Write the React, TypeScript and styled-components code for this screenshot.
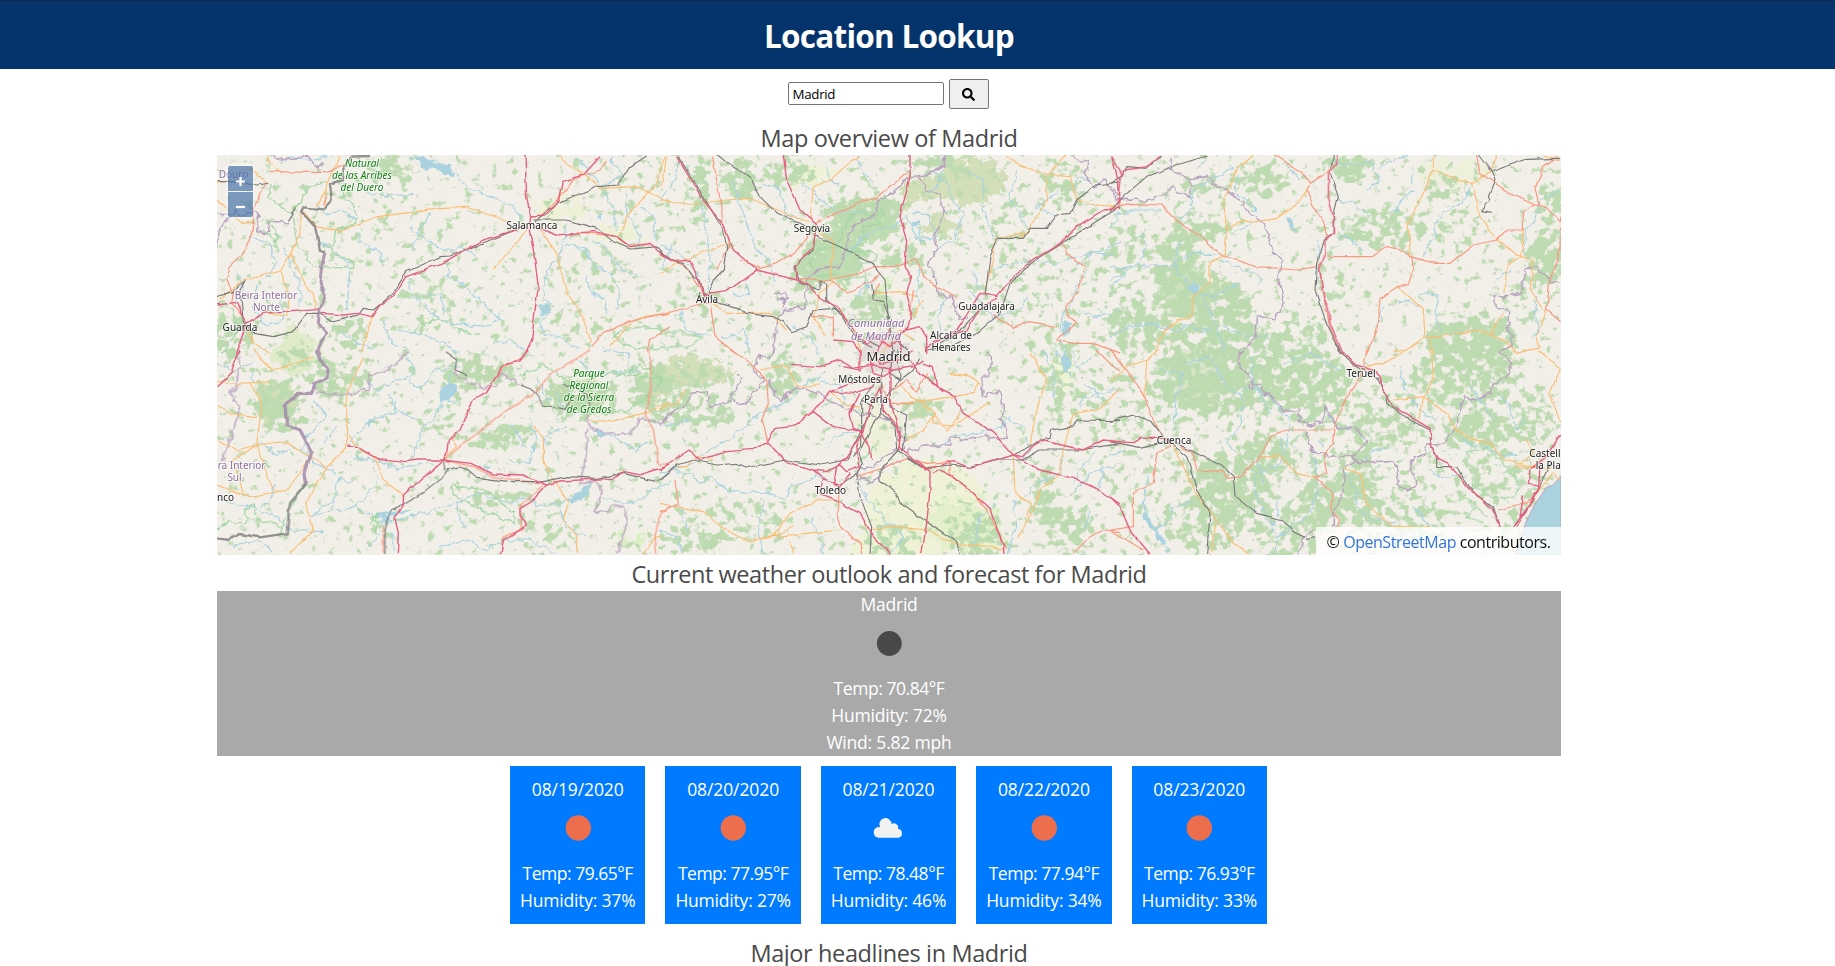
import React from 'react';
import styled, { createGlobalStyle } from 'styled-components';

const GlobalStyle = createGlobalStyle`
  *, *::before, *::after { box-sizing: border-box; }
  html, body { margin: 0; padding: 0; height: 966px; overflow: hidden; background: #fff; }
  body { font-family: "Open Sans", "Noto Sans", sans-serif; font-size: 18px; line-height: 27px; color: #4a4a4a; }
`;

const Page = styled.div`
  height: 966px;
  overflow: hidden;
`;

const Header = styled.header`
  height: 69px;
  padding: 2px 57px 0 0;
  border-top: 1px solid #12284a;
  background: #05336b;
  display: flex;
  align-items: center;
  justify-content: center;
`;

const Title = styled.h1`
  margin: 0;
  font-size: 31.5px;
  line-height: 36px;
  font-weight: 700;
  letter-spacing: -0.75px;
  color: #fff;
`;

const Content = styled.main`
  width: 1344px;
  margin-left: 217px;
`;

const SearchBar = styled.form`
  height: 50px;
  padding-right: 2px;
  display: flex;
  align-items: center;
  justify-content: center;
  gap: 5px;
`;

const SearchInput = styled.input`
  width: 156px;
  height: 23px;
  margin-bottom: 1px;
  padding: 2px 4px 1px;
  border: 1px solid #767676;
  border-radius: 2px;
  font: 13.33px "Open Sans", sans-serif;
  letter-spacing: -0.3px;
  color: #000;
`;

const SearchButton = styled.button`
  width: 40px;
  height: 30px;
  padding: 0;
  border: 1px solid #767676;
  border-radius: 2px;
  background: #efefef;
  display: flex;
  align-items: center;
  justify-content: center;
`;

const SectionTitle = styled.h2<{ $tracking: number }>`
  margin: 0;
  height: 36px;
  padding-top: 1px;
  font-size: 23.5px;
  line-height: 36px;
  font-weight: 400;
  letter-spacing: ${p => p.$tracking}px;
  text-align: center;
  white-space: nowrap;
`;

const MapFrame = styled.section`
  position: relative;
  height: 400px;
  overflow: hidden;
  svg { display: block; }
`;

const ZoomPanel = styled.div`
  position: absolute;
  left: 9px;
  top: 9px;
  padding: 2px;
  border-radius: 4px;
  background: rgba(255, 255, 255, 0.4);
  display: grid;
  gap: 1px;
`;

const ZoomButton = styled.button<{ $edge: 'top' | 'bottom' }>`
  width: 25px;
  height: 25px;
  padding: ${p => (p.$edge === 'top' ? '5px 0 0' : '3px 0 0')};
  border: 0;
  border-radius: ${p => (p.$edge === 'top' ? '2px 2px 0 0' : '0 0 2px 2px')};
  background: rgba(0, 60, 136, 0.5);
  display: flex;
  align-items: center;
  justify-content: center;
`;

const Attribution = styled.div`
  position: absolute;
  right: 0;
  bottom: 0;
  width: 245px;
  height: 28px;
  background: rgba(255, 255, 255, 0.8);
  color: #111;
  font-size: 16px;
  line-height: 30px;
  letter-spacing: -0.46px;
  text-align: center;
  white-space: nowrap;
  a { color: #3273dc; text-decoration: none; }
`;

const Current = styled.section`
  height: 165px;
  background: #a9a9a9;
  color: #fff;
  text-align: center;
`;

const Line = styled.div<{ $tracking?: number }>`
  height: 27px;
  font-size: 17.5px;
  letter-spacing: ${p => p.$tracking ?? -0.2}px;
  white-space: nowrap;
`;

const IconSlot = styled.div`
  height: 57px;
  display: flex;
  justify-content: center;
`;

const Forecast = styled.section`
  display: flex;
  justify-content: center;
  gap: 20px;
  margin: 10px 0;
  padding-right: 1px;
`;

const DayCard = styled.article`
  width: 135.4px;
  height: 158px;
  padding: 10px 0;
  background: #007bff;
  color: #fff;
  text-align: center;
`;

const WeatherIcon = ({ kind }: { kind: 'night' | 'sun' | 'cloud' }) => (
  <IconSlot>
    <svg width="50" height="50" viewBox="0 0 50 50">
      {kind === 'cloud' ? (
        <path d="M15.300 34.800A5.400 5.400 0 0 1 15.600 24.100 5.300 5.300 0 0 1 17 24.200 6.200 6.200 0 1 1 28.700 21.200 4 4 0 0 1 34.900 25.800 4.600 4.600 0 0 1 35.600 34.800Z" fill="#f2f2f2" />
      ) : (
        <circle cx="25.3" cy={kind === 'sun' ? 25 : 25.5} r={kind === 'sun' ? 12.7 : 12.4} fill={kind === 'sun' ? '#ec6e4c' : '#48484a'} />
      )}
    </svg>
  </IconSlot>
);

/* ---- map data: each sheet is drawn at three units per pixel ---- */

type Sheet = {
  x: number; y: number;
  rivers?: string; border?: string; heavy?: string; park?: string;
  primary?: string; trunk?: string; motorway?: string; rail?: string;
};

const sheets: Sheet[] = [
  {
    x: 210, y: 150,
    rivers: 'M215 35L250 20 300 35 350 20M600 20L630 35 680 30 720 65 745 75 765 110 830 135 900 165 935 200M450 110L490 130 540 140 605 130M320 160L350 195 390 180 440 210M655 195L625 250 610 290M350 285L400 330 420 360 410 480M440 250L450 280 500 300 520 335M600 235L640 260 700 300 750 290 800 320M710 340L715 375 770 410 820 460 870 510M595 390L610 440 650 470 690 510 720 520 840 530 880 480M650 430L690 430 700 490M1070 220L1060 280 1040 330 1010 360 1000 440 1025 480 990 520 1000 550 1060 570 1110 600M1070 280L1120 290 1150 340 1200 370 1230 430 1220 480M1100 280L1140 330M1150 270L1190 300 1230 350 1290 380M1130 370L1140 420 1180 450 1190 490M1180 120L1210 180 1220 240M1250 130L1250 190 1290 250 1280 300M1290 170L1330 200 1340 270M1100 20L1170 110 1240 80 1200 20M560 540L620 550 680 570 750 610M400 540L440 580 490 600M520 520L540 570 600 600M170 380L200 340 180 280 120 260M140 400L130 470 170 530 220 510 215 440M80 360L100 420 70 460M220 290L240 350 270 400 270 470M850 580L900 570 960 610M330 270L390 320 420 340',
    border: 'M190 20L240 30 290 15 320 50 340 40M20 295L30 230 80 180 90 200 130 180 145 200 140 245 175 250 180 215 235 215M30 190L60 195',
    heavy: 'M425 20L480 18M425 22L400 50 402 90 360 100 365 150 340 178 280 172 273 185 315 230 330 300 345 305',
    park: 'M180 100L175 140 210 170 250 190M250 200L260 280 310 350 435 355 420 330 365 310 380 240 440 220 435 180 400 140 405 100M250 180L275 150 300 110 350 90M610 550L650 515 720 510 740 540 790 550M180 215L210 270 190 275 160 240M20 460L70 480 80 540 40 610M1210 560L1260 530 1380 540M1210 560L1250 590 1380 600',
    primary: 'M20 100L60 90 80 65 130 60 170 100M170 20L210 70M60 60L110 110M20 150L100 220 130 215M275 180L320 230 390 245 500 200 700 175 770 172 870 205 890 215M345 165L350 100 390 20M270 190L270 250 240 310 285 400 310 430 318 480M240 310L210 360 100 390 30 450M210 365L235 430 230 500 160 485M950 240L900 300 850 358M985 230L1040 310 1070 430 1110 480 1145 580M1055 20L1070 45 1120 70 1170 115 1280 110 1380 155M1365 20L1340 100 1250 200 1225 260M1200 590L1250 530 1300 500 1380 490M320 170L350 120M490 490L470 550 455 610M110 530L130 580 180 610',
    trunk: 'M180 65L350 68 400 45M165 105L130 180 130 240 100 310 60 350 50 390 70 430 65 460 95 495M340 165L350 140M985 205L1060 130 1090 90 1170 60 1190 30M1100 245L1220 260 1250 285 1320 285M1145 590L1180 550 1260 515 1380 485M1310 610L1320 570 1380 530',
    motorway: 'M20 465L80 457 95 495 110 520 160 490 230 483 330 475M80 612L108 520M335 490L400 495 445 490 485 500 510 465 550 440 590 380 705 335 820 270 950 230M945 15L950 140 962 200 958 240 970 300 985 410 975 480 965 570 945 612M960 198L1010 195 1050 145 1060 95 1120 75 1170 20M990 235L1040 255 1150 245 1220 260 1260 290 1320 280 1380 330',
    rail: 'M20 440L70 425 105 392 90 420 100 515 130 550 190 560 250 545 290 490 330 490 370 515 445 495 460 475 490 480 550 430 590 365 690 320 720 318 930 235M975 215L1040 160 1160 110 1225 105 1260 50 1310 18M970 210L1070 210 1160 235 1210 275 1260 297 1345 290 1380 330M20 95L100 95 140 105 175 100M235 215L260 175',
  },
  {
    x: 210, y: 350,
    rivers: 'M600 400L620 420M590 20L610 60 600 100 640 110 670 60 750 50M700 150L680 200 640 230 620 290 600 330M720 70L710 150 740 160M540 130L560 180 620 210M480 210L440 250 420 280M480 210L550 190 560 150M300 250L270 300 330 350 380 370M430 320L530 340 560 355 640 340M300 500L340 485 410 480 460 450 500 400M420 400L390 380 370 450 310 490M450 475L500 510 530 515 640 490 740 460 800 430 900 460 960 440 980 470 1080 450 1120 420M740 460L750 510 770 530M690 590L780 570 820 600 890 570 960 570 1040 610M1150 240L1210 260 1280 300 1310 280M1070 230L1000 260 1010 290M960 220L980 260 960 340 900 330M1040 130L1060 180 1130 190M900 230L930 260 940 290M800 360L840 350 830 380M1180 440L1240 460 1290 450 1320 420 1380 400M1050 480L1070 530 1130 560M20 450L100 465 200 500 240 540 340 545M200 400L180 460 150 470M20 40L70 60 130 40M150 280L200 310 250 290M70 590L150 570 180 600M130 60L130 100M1100 30L1140 60 1200 70 1290 60M1180 0L1250 10 1260 60M980 80L1000 130 1020 150M470 100L500 120 540 100 600 80M310 150L350 200 290 260M380 230L340 280M520 540L470 600M540 545L560 600',
    border: 'M590 5L560 40 480 80 475 120 400 135 315 128M730 70L820 115 860 105 875 65 930 105M1380 190L1350 220 1300 200 1260 250 1215 255 1140 235 1130 190M1130 235L1125 330 1110 400 1160 395 1175 430 1155 485 1190 490 1210 465 1240 470 1250 520 1235 570 1220 612M90 20L80 110 60 130 90 180 70 240 40 330',
    park: 'M20 540L60 515 110 515 110 480 130 465 140 510 200 520 210 550 240 470 290 400M730 405L830 420 910 490 915 520 840 490 735 440 725 405M930 80L1000 45 1050 80 1200 70 1360 90 1300 150 1240 185 1180 190M1360 90L1290 45 1220 80M480 520L500 490 500 550',
    primary: 'M20 95L80 100 185 95M130 0L185 60 230 50 310 20M120 100L155 160 140 290 190 420M20 170L60 190 140 200M20 270L80 300 140 285 220 275 320 330 350 355 410 290 410 140 415 120 460 20M20 405L120 440 230 420 300 330 300 315M140 285L70 330 100 430M350 355L320 400 290 460 310 540 240 610M415 260L450 300 490 320 520 390 585 440M700 325L740 290 720 260M970 230L1000 260 1000 340 1040 400 1075 460 1060 510 1100 560 1100 612M1140 210L1200 215 1260 200 1300 190 1380 160M1300 612L1330 570 1350 560',
    trunk: 'M1140 0L1040 60 970 130 880 190 800 250 700 330M830 120L880 50 945 20M1315 0L1325 100 1305 190 1330 240 1345 340 1380 345M700 330L790 350 850 380 1000 400M1000 405L930 470 935 540 880 560 875 590M1380 470L1350 490 1335 560 1340 612M520 530L520 610',
    motorway: 'M90 0L65 65 20 110M955 0L925 35 880 45 830 125 790 150 750 240 715 270 710 310 700 330 580 435 580 470 555 500 565 550 562 612M415 285L440 290 500 325 590 335 620 330 700 330M700 330L780 340 850 372 940 375 1010 405 1050 393 1210 385 1245 365 1290 375 1380 345M1010 405L960 460 930 475 930 495 950 525 900 560 880 570 872 612',
    rail: 'M705 5L740 30 735 60 775 75M930 105L970 120 1000 165 1070 178 1080 150M1060 100L1130 130 1140 170M700 330L705 360 750 350 775 360 800 382 900 395 1000 395 1070 380 1160 385 1240 370 1340 395 1380 365M715 360L700 380 635 430 580 465 545 480 525 540 525 612',
  },
  {
    x: 660, y: 150,
    rivers: 'M0 150L50 80 60 30M110 100L130 180 150 320 145 420M215 90L260 220 290 300 330 330 340 400M310 100L360 120 380 190 420 210M430 100L500 160 540 190 620 180M600 270L640 240 700 230 740 200 770 260 830 265 800 190 760 190M820 60L860 100 880 150 910 190 880 270 830 300M850 60L830 110 800 130M920 60L970 90 970 180 1010 280M1070 60L1050 150 1110 240M1200 120L1130 170 1190 200M1380 280L1340 300 1250 320 1190 340 1110 330 1000 355M1250 350L1300 310 1360 320M1280 350L1240 440 1210 500 1200 560 1220 612M590 20L620 80 640 100M540 110L510 90 500 50M0 290L60 310 120 380M40 280L0 360M220 430L270 440 260 400M400 530L450 560 480 610M590 440L620 400 660 380M780 360L770 430 790 480M860 440L830 500 850 560M180 570L250 540 270 600M940 370L960 420M930 420L1000 500 1080 480 1100 440M1250 480L1310 500 1380 480M600 270L560 320M1290 90L1250 80 1240 130M780 230L770 270M60 480L80 540 150 560',
    border: 'M850 20L850 45 800 75 750 80 710 120 660 150 640 200 600 215 570 240 540 350 480 355 440 390 435 470 370 480 370 440M780 80L800 120 835 135 855 190 820 260 830 300 800 350 830 380 830 430 880 445 900 510 930 500M1230 20L1285 35 1275 70 1300 115 1330 90 1380 140M345 430L375 430 385 445 350 450M350 510L340 612M370 480L350 510',
    park: 'M570 200L600 180 630 200 670 180 660 220 600 230 620 260 580 300 650 310 650 330 600 340 620 380 550 385 510 370 470 380 450 340 470 300 530 290 550 240ZM640 190L670 240M0 550L60 545 120 560 100 590 0 590',
    primary: 'M20 20L10 90 0 110M0 150L80 165 200 150 270 145 400 200 445 215M600 20L555 50 510 90 460 110 450 210M0 370L70 330 200 280M475 250L520 270 510 370 520 400M1040 20L1080 45 1160 75 1230 80 1250 150 1300 165 1380 170M1160 80L1160 150 1100 250 1005 265 1000 320 980 400 975 430M1170 70L1215 15M520 395L480 430 460 500 500 560M150 455L200 490 330 490 380 540M640 430L720 425 770 440M540 480L590 550 600 612M790 450L760 500M670 610L720 540 760 570M1110 240L1080 265',
    trunk: 'M158 20L180 150 190 220 210 280 170 360M470 215L520 195 600 155 650 145 740 70M0 495L110 465 150 455M150 455L165 560 230 612M240 330L300 355 350 340 400 310 450 250M410 385L500 390 600 370 640 350 700 350 770 325 790 380 830 410 890 445M520 395L560 430 640 390 660 370M1205 280L1220 310 1275 350 1250 430 1220 470 1225 500 1250 520 1190 570 1240 580 1300 580 1380 610M1000 490L1060 535 1110 515 1190 530M0 315L80 350 130 430M455 500L520 500 520 560M750 500L760 420M640 430L660 400',
    motorway: 'M50 20L130 150 190 225 220 300 290 360 410 390 450 410 480 445 530 470 570 520 590 560M370 15L380 90 420 180 470 220 460 290 410 345 410 390M750 15L750 80 720 200 740 270 735 350 755 380 740 430 755 490 740 540M0 310L40 335 90 330 120 400 130 435 200 425 290 360M1355 20L1375 90 1380 160M1380 175L1330 180 1250 230 1200 280 1120 330 1050 390 1010 440 960 430 910 510 890 540 800 590M590 560L620 580 650 560 690 590 740 540 780 530 800 560 800 612M520 570L580 575 600 612M1010 445L960 480 920 540 860 560M690 540L650 610M740 530L720 560 720 612',
    rail: 'M170 15L200 40 270 80 300 140 350 190 440 230M55 20L130 140 190 240 200 290 190 360 160 390 145 430M460 255L540 290 630 335 675 390 680 450 690 540 700 612M0 300L40 335 70 340 100 380 120 390 130 430 170 455 240 475 255 490 340 500 370 515 395 545 440 530 460 480 520 475 550 500M465 260L460 300 405 350 420 400 480 420 480 390 500 400 500 450 550 500 590 570 640 590M1380 95L1310 105 1250 150 1230 190 1190 195 1160 235 1110 235 1090 265 1010 265 990 320 975 440M1380 170L1220 270 1140 320 1050 400 1020 490 950 550 870 590 800 600M960 480L900 540 840 580M635 400L640 450 670 455 690 510M700 560L740 600M660 590L620 570',
  },
  {
    x: 660, y: 350,
    rivers: 'M0 370L80 350 150 300 220 260 300 190 390 150 440 100 500 60M40 365L100 370 120 400 150 380 200 420 260 430 320 425 380 450 390 410 430 400 470 370 500 390M590 390L620 450 680 510 730 560 690 612M500 300L520 260 600 240M470 90L540 110 560 160M1190 0L1230 80M1150 0L1180 70 1180 150M1240 0L1250 50 1300 20M1380 120L1270 140 1260 170M1050 200L1020 230 950 250 880 260 840 290M1100 260L1110 300 1080 330M1210 310L1200 370 1130 400 1100 440M1300 310L1250 370 1240 400M1380 340L1290 370 1240 430M1330 350L1310 430M1290 480L1270 540M1000 470L960 500 940 590M1060 450L1070 530 1040 612M310 450L295 550 310 612M450 500L480 560 490 612M60 470L80 540M0 230L60 220 90 200M0 540L50 560 70 612M1270 100L1330 150M1040 210L1100 230',
    border: 'M345 0L335 20 290 20 285 70 310 95 260 160 230 165 215 140 240 90 230 75M215 150L150 170 140 125 90 130 70 170 30 190 0 225M325 90L360 155 410 110 480 130 520 160 600 190 690 210 740 270 720 300 670 320 640 350 600 360 590 385 640 395 680 350 720 330M740 300L780 300 790 285 870 285 870 265 910 270 940 265 980 255 990 270 1035 265 1040 235 1020 210 1030 190 1020 120 970 140 965 80 990 70 995 20 980 0',
    park: 'M590 340L620 320 640 290',
    primary: 'M0 180L50 160 80 120M300 60L380 45 410 110 480 105M510 125L560 170 600 170M80 345L110 320 160 330M50 350L80 350M0 460L130 485 200 540 270 575 340 560 400 530M340 560L390 490 470 450 530 450M340 560L440 550 540 540M390 570L400 612M630 540L700 530 800 540 880 580 1000 590 1030 600M870 70L940 80 960 100 940 130 780 155 710 160M720 100L750 140 790 160 820 190 820 220 880 225 990 160M740 270L790 240 820 200M1110 10L1160 90 1130 170 1110 290M1240 190L1210 300 1200 370 1140 420 1110 500 1070 560M1060 320L1065 430 1110 460 1100 500M1240 190L1310 180 1330 160 1380 120M820 190L860 240 900 190',
    trunk: 'M210 0L260 30 320 90 325 160 305 210 320 275M45 390L55 460 0 485M540 410L530 490 540 530 600 580 605 612M590 380L650 360 740 325M740 325L800 340 870 335 870 370 940 430 980 480 1040 600M1240 610L1290 560 1330 540 1380 545M700 120L740 90 770 130 800 70M620 100L660 90 690 160 760 160M1310 0L1350 40 1380 60',
    motorway: 'M0 360L90 300 120 330 200 305 280 298 320 275 345 235 400 230 460 185 510 125 600 90M320 275L380 335 460 360 500 365 540 345 560 365 600 350 590 290 610 240 630 170 660 110M395 43L480 50 540 30 580 55 640 45 700 60 760 50 790 30M460 185L520 230 610 245M510 125L580 130 640 110M600 130L570 190 580 235 610 245 560 320 530 350 520 400 540 410 570 370M600 245L630 290 635 330M460 360L490 385 480 430 530 450 560 470 600 490 640 560 690 612M540 405L490 385M660 110L670 180 710 230 720 290 760 330 800 360M690 50L690 150 710 220 720 270 715 300M780 70L830 110 880 135 910 190 960 220 1000 250 1060 315 1140 360 1240 385 1320 420 1380 462M790 360L880 335 930 355 1060 315 1090 320 1140 270 1270 300 1330 270 1380 275M770 330L810 365 810 420 800 520 785 612M820 370L840 360 880 380 930 420 990 475 1030 590 1032 612M600 0L600 60 550 50M830 110L820 50 790 40M640 0L660 40 720 30 760 0M700 60L670 80 640 70 630 30M740 20L780 70 850 125',
    rail: 'M0 390L50 345 100 330 170 345 230 340 260 352 380 330 480 345 560 330 600 250 640 170 605 150 605 290 580 320M540 405L590 370 610 340 600 310 640 220 665 190 665 50M665 190L705 230 710 295 740 320 790 355M665 150L700 115 720 80 710 0M690 120L690 170 740 195 730 300M715 300L660 360 660 390 710 430 720 460 800 515 890 575 900 612M590 370L600 440 635 530 630 612M740 325L790 355 870 345 930 352 1020 330 1090 330 1140 300 1260 300 1380 280M1060 315L1110 290 1140 270 1170 265 1175 240 1240 230 1250 210 1380 212M700 0L690 70 720 90 760 60 780 20M605 150L660 80',
  },
  {
    x: 1110, y: 150,
    rivers: 'M370 50L330 80 250 110 240 180 210 210M380 80L380 130 440 180M530 50L570 90M670 40L750 45 780 30 810 90 770 120M810 50L840 30 890 20M905 50L905 105M915 120L880 140 860 180 840 190M680 150L730 160 765 190M680 260L720 265 760 300M1080 100L1070 140 1020 180 980 210 970 260 940 320M1350 120L1290 150 1280 200 1250 240 1240 310M0 240L20 200 60 180 150 180M105 230L100 320 50 370 0 410M0 355L80 350 180 345 260 310 320 310M210 270L190 340 240 420 310 440 380 400M330 325L380 350 440 370 450 400M270 440L310 500 330 570 345 612M0 560L60 530 130 520 200 540 230 520 280 550 300 530M340 530L420 560 470 560M370 245L430 220M625 270L625 400M860 460L890 450 930 470M930 430L990 435 975 500 990 540M1200 360L1160 390M1280 440L1270 500 1290 540 1260 570M820 470L800 530M450 525L420 530M0 390L60 360M290 20L260 60',
    border: 'M180 20L185 65 240 85 290 75 310 100 350 120 400 160 430 200 460 220 480 260 475 290 515 330 505 390 520 430 510 490 490 510 440 495 435 565 385 612M240 85L240 145 190 115 170 130 100 155 50 145 20 150 0 120M1350 395L1320 395 1280 350 1250 360 1230 425 1190 440 1155 435 1155 475 1200 480 1195 540 1210 580 1175 600',
    primary: 'M430 15L385 50 370 90 340 150 350 240 345 310 300 340 300 400 250 440 245 500 200 510 145 570 140 612M350 240L400 210 440 215 500 205 560 165 590 120M0 165L30 170M970 15L970 60 940 130 895 220 900 320M970 60L1020 80 1085 100 1100 150 1110 200 1160 270 1230 320 1270 330 1260 420 1300 480M1230 320L1190 345 1185 430M1240 240L1240 290 1230 320M1085 100L1140 65 1160 15M865 410L940 480 945 560 990 560 1050 550 1090 540 1140 550 1180 490M945 560L890 600 850 605M960 570L960 612M1310 480L1280 560 1290 590 1220 610 1180 570 1140 550M1300 15L1350 30',
    trunk: 'M495 15L570 65 600 100 590 120 610 170 640 210 650 260M600 100L650 70 670 40M0 175L60 160 155 165 200 215 280 265 335 315 440 350 560 360 620 350M650 318L690 320 790 320 830 290 860 295 900 320 980 340 1020 340 1090 285 1160 270 1190 240 1240 240 1240 190 1275 165M905 320L910 355 895 400 865 410 810 450 800 540 770 612M1100 15L1110 70 1200 130 1275 165 1310 170 1350 215M1340 20L1300 50 1275 120 1290 165M1352 200L1350 300 1320 390 1310 480 1352 515M625 340L640 430 660 530 690 600',
    motorway: 'M5 20L35 70 25 165M150 20L110 50 45 60 30 90M680 15L680 40 655 70 655 140 670 200 670 250 645 270 645 310 628 350 640 440 655 475 660 520 700 612',
    rail: 'M0 185L40 140 110 80 200 45 290 18M0 100L40 75 50 50 110 55 155 18M670 15L660 70 685 140 670 200 670 250 640 270 620 340 615 420 650 520 695 612M1105 15L1140 60 1155 90 1135 140 1140 150 1115 185 1145 190M1145 65L1200 45 1250 28 1350 25',
  },
  {
    x: 1110, y: 350,
    rivers: 'M110 380L100 460 130 540 180 612M130 540L180 510 190 470 250 455M150 60L220 70 200 130 190 240M220 40L300 20 350 110 400 140 390 230 350 280 380 310M420 20L440 110 480 190M520 40L600 10 690 60M400 110L470 130 520 190 540 210 530 290 500 350 430 370 440 440 460 480 500 560 500 612M505 440L500 500M610 320L625 400 610 470 560 520 500 560M690 350L740 420 740 470 790 510 860 520M760 330L790 300 840 290M870 50L880 110 930 180 980 215M1080 110L1120 160 1150 210M1170 130L1200 180 1220 240 1240 200M950 360L1000 385 1070 380M1050 270L1120 290 1160 310 1220 320M910 470L960 530M520 300L510 260M0 320L50 300M620 270L640 290M650 190L680 230 740 235 760 270M440 330L460 400',
    border: 'M400 0L375 35 410 70 430 90 415 110 430 120 430 95 470 130 520 180 570 180 570 215 600 225 640 215 645 170 670 210 685 235 740 235 775 275 740 310 680 320 605 305 590 245M720 310L740 330 700 355 700 420 670 490 670 530M610 540L580 570 565 612M740 335L820 330 860 345 865 410 890 425 920 400 900 350 910 320 940 320 950 285 990 285 1020 260 1040 220 1060 140 1100 150 1140 130 1150 100 1190 85 1205 40 1170 0',
    park: 'M1070 310L1120 295 1150 310 1200 360 1230 410 1210 440 1130 440 1120 420 1080 410 1100 360 1075 340ZM1045 450L1070 440 1090 470 1070 500 1120 520M1100 470L1130 500',
    primary: 'M0 95L50 50 110 30 150 0M110 30L105 140M190 290L230 370 250 420 320 510 300 612M320 510L370 580 420 612M450 320L510 320 560 370 620 385M700 355L750 370 770 460 850 530 960 530M770 50L830 35 890 0M965 0L970 90 940 140 930 210M850 150L940 140 1010 190 1030 230 1080 265 1140 280 1180 330 1270 350M1250 270L1270 310 1220 350 1320 355M1270 350L1310 320M1285 0L1352 55 1320 130 1352 220M1352 390L1330 370 1270 440',
    trunk: 'M0 0L50 60 100 130 130 210 150 245 180 290 140 310 130 400 70 430 70 530 0 540M210 290L250 310 260 360 340 365 350 385 390 380 450 320 485 255 530 240 590 240 670 240 680 210 700 160 740 100 755 60M675 240L670 280 640 310 650 370 615 385 670 430 665 480 685 510 680 530M770 0L760 60M1165 480L1230 465 1270 445M0 540L100 600',
    motorway: 'M0 440L30 470 60 540 120 612M0 275L75 278 95 265 180 265M695 0L740 45 800 65 820 120 850 170 900 200 960 235 965 290 985 325 1015 340 1080 420 1150 480 1170 530M1352 255L1300 330 1260 360 1255 400 1290 410 1240 490 1210 530M1290 350L1285 420 1220 530M1240 440L1230 500',
    rail: 'M0 215L70 195 125 215 160 260 230 320 260 420 300 490 290 612M0 275L90 292 180 270 240 300 340 350 370 380 375 440 440 490 520 510 550 545 590 565 615 560M685 0L740 50 800 85 830 140 830 160 890 205 960 240 965 290 980 320 980 350 1010 350 1040 350 1060 385 1100 440 1150 470 1170 530M1320 340L1280 430 1210 530',
  },
];

/* wooded areas: centre, radii, strength */
const woods: number[][] = [
  [390, 168, 26, 14, 0.8], [230, 337, 22, 24, 0.7], [277, 405, 24, 28, 0.95], [340, 380, 34, 18, 0.75], [300, 360, 20, 20, 0.5],
  [350, 335, 20, 18, 0.7], [430, 300, 40, 25, 0.3], [477, 372, 40, 14, 0.9], [450, 385, 10, 18, 0.7], [503, 436, 36, 14, 0.75], [577, 398, 40, 20, 0.85],
  [648, 388, 22, 24, 0.8], [440, 420, 22, 12, 0.5], [400, 235, 70, 40, 0.15], [600, 270, 40, 20, 0.3], [570, 325, 50, 20, 0.25], [500, 497, 36, 10, 0.55], [545, 530, 30, 18, 0.4],
  [372, 525, 14, 15, 0.5], [700, 180, 10, 45, 0.8], [740, 180, 18, 22, 0.85], [787, 172, 26, 14, 0.8], [865, 215, 42, 20, 1], [835, 255, 30, 26, 1],
  [806, 275, 14, 18, 1], [900, 255, 22, 14, 0.75], [873, 308, 30, 16, 0.85], [940, 165, 30, 14, 0.7], [1005, 225, 30, 40, 0.3], [1060, 175, 22, 14, 0.6], [1070, 195, 24, 15, 0.6],
  [690, 412, 50, 16, 0.7], [784, 376, 16, 24, 0.95], [680, 378, 50, 16, 0.6], [733, 523, 60, 26, 0.4], [690, 542, 36, 12, 0.6], [890, 540, 22, 20, 0.65],
  [978, 535, 30, 24, 0.75], [1043, 497, 12, 32, 0.85], [1072, 528, 24, 24, 0.8], [1060, 380, 18, 40, 0.6], [1110, 400, 40, 44, 0.3], [920, 410, 18, 12, 0.7],
  [1350, 168, 24, 16, 0.95], [1200, 187, 20, 10, 0.7], [1262, 180, 30, 18, 0.7], [1200, 228, 32, 14, 0.9], [1178, 270, 24, 34, 1], [1217, 308, 34, 34, 1],
  [1150, 325, 44, 28, 0.8], [1130, 245, 30, 20, 0.5], [1253, 345, 34, 22, 0.8], [1306, 335, 26, 20, 0.6], [1383, 228, 46, 20, 0.7], [1443, 188, 22, 14, 0.7], [1456, 230, 20, 20, 0.5],
  [1547, 257, 22, 30, 1], [1550, 200, 14, 18, 0.8], [1470, 340, 46, 26, 0.95], [1210, 380, 60, 36, 0.95], [1303, 385, 50, 34, 0.85], [1467, 375, 54, 34, 0.75],
  [1480, 430, 36, 18, 0.9], [1380, 425, 40, 25, 0.55], [1323, 498, 26, 26, 0.85], [1357, 485, 20, 34, 0.95], [1400, 520, 50, 24, 0.5], [1227, 490, 44, 36, 0.85], [1200, 530, 40, 20, 0.55],
  [1267, 455, 26, 20, 0.9], [1290, 530, 36, 26, 0.55], [1510, 480, 40, 30, 0.4], [1533, 418, 24, 30, 0.55], [1520, 300, 24, 20, 0.35], [1340, 280, 20, 30, 0.3],
  [1300, 460, 200, 100, 0.2], [1060, 300, 100, 60, 0.2], [1530, 530, 30, 20, 0.5], [640, 190, 60, 30, 0.1], [700, 300, 30, 20, 0.35],
];

const meadows: [number, number, number, number, string][] = [
  [970, 180, 34, 24, '#d2dfb8'], [920, 190, 18, 14, '#d2dfb8'], [945, 225, 18, 12, '#d2dfb8'], [690, 372, 40, 12, '#d3dfb9'], [922, 410, 10, 10, '#d3dfb9'],
  [812, 175, 18, 11, '#eff2d6'], [1450, 172, 34, 15, '#eff0dc'], [560, 210, 26, 14, '#eef0d8'], [620, 235, 30, 10, '#eef0d8'], [925, 505, 58, 44, '#eff2d6'], [900, 545, 50, 18, '#eff2d6'],
  [880, 430, 24, 26, '#eef0da'], [965, 525, 40, 28, '#e4f0cc'], [882, 287, 6, 12, '#ddefc4'], [1060, 370, 8, 18, '#eef3d4'], [632, 540, 9, 6, '#dcf0c8'], [295, 352, 24, 22, '#dfebc9'],
  [865, 225, 30, 20, '#c3dfb4'], [833, 262, 26, 22, '#c3dfb4'], [1190, 290, 26, 26, '#d0e3c2'], [1200, 375, 30, 28, '#d9e6cb'],
  [660, 385, 12, 12, '#d3dfb9'], [585, 400, 22, 14, '#d3dfb9'], [275, 400, 18, 20, '#d3dfb9'], [885, 350, 24, 18, '#e3dcd8'],
];

const lakes = 'M414 157l8-2 14 8 14 2 4 12-10-3-10-6-10 2zM538 306l8-2 5 5-6 6-7 2 4-7zM440 389l14-8 2 12-6 6-10 3zM376 514l16-3 20 0-14 4-24 2zM378 522l6-2-4 5zM366 423l8-3-4 7zM566 500l14-9 9-8 1 10-9 7-11 5zM382 516l6-4 1 12-8-2zM595 431l8 0-1 5zM1285 218l6 1 6 12-8-4zM862 283l8-1-2 5zM918 238l8 3-6 3zM910 225l9-6-2 8zM1062 350l10 14-6 10-6-12zM1144 510l6 10 12 16 6 10-6 0-10-14-8-14zM1065 320l5 2-4 16-4-3zM1190 288l4-8 4 10-3 6zM1250 203l8 9-5 0zM1265 518l12 6-4 2zM597 216l4-2 0 6z';

type Label = { t: string; x: number; y: number; c?: 'city' | 'park' | 'region'; s?: number; a?: 'start' | 'end' };
const labels: Label[] = [
  { t: 'Natural', x: 362, y: 167, c: 'park' }, { t: 'de las Arribes', x: 362, y: 179, c: 'park' }, { t: 'del Duero', x: 362, y: 191, c: 'park' },
  { t: 'Douro', x: 233.5, y: 178, c: 'region' }, { t: 'Salamanca', x: 532, y: 228.5 },
  { t: 'Beira Interior', x: 266, y: 298.5, c: 'region' }, { t: 'Norte', x: 266.5, y: 310.5, c: 'region' }, { t: 'Guarda', x: 240, y: 331 },
  { t: 'ira Interior', x: 265.5, y: 469, c: 'region', a: 'end' }, { t: 'Sul', x: 234.5, y: 481, c: 'region' }, { t: 'nco', x: 234, y: 500.5, a: 'end' },
  { t: 'Parque', x: 589, y: 377, c: 'park' }, { t: 'Regional', x: 589, y: 389, c: 'park' }, { t: 'de la Sierra', x: 589, y: 401, c: 'park' }, { t: 'de Gredos', x: 589, y: 412.5, c: 'park' },
  { t: 'Segovia', x: 812, y: 232 }, { t: 'Ávila', x: 707, y: 303 },
  { t: 'Comunidad', x: 876, y: 327, c: 'region', s: 11 }, { t: 'de Madrid', x: 876, y: 340, c: 'region', s: 11 },
  { t: 'Guadalajara', x: 986.5, y: 309.5 }, { t: 'Alcalá de', x: 951, y: 338.5 }, { t: 'Henares', x: 951, y: 351 },
  { t: 'Madrid', x: 888.5, y: 361, s: 13 }, { t: 'Móstoles', x: 859.5, y: 382.5 }, { t: 'Parla', x: 876, y: 403 }, { t: 'Toledo', x: 830.5, y: 493.5 },
  { t: 'Cuenca', x: 1174, y: 443.5 }, { t: 'Teruel', x: 1361, y: 377 }, { t: 'Castell', x: 1560.5, y: 456.5, a: 'end' }, { t: 'la Pla', x: 1560.8, y: 469, a: 'end' },
];

const MapLabel = styled.text<{ $kind: 'city' | 'park' | 'region'; $italic: boolean; $size: number }>`
  font-family: "Noto Sans", sans-serif;
  font-size: ${p => p.$size}px;
  font-style: ${p => (p.$italic ? 'italic' : 'normal')};
  fill: ${p => ({ city: '#222', park: '#107c10', region: '#8d6d9d' }[p.$kind])};
  stroke: rgba(255, 255, 255, 0.65);
  stroke-width: 2px;
  stroke-linejoin: round;
  paint-order: stroke;
`;

const layers: [keyof Sheet, string, number][] = [
  ['rivers', '#aad3df', 3.4], ['park', '#a5d6a5', 4], ['border', '#b9a4bf', 4.4], ['primary', '#fbbf74', 3.4],
  ['trunk', '#f99a80', 3.6], ['rail', '#7a7a7a', 3.4], ['motorway', '#e4617f', 4.2],
];

const RegionMap = () => (
  <svg width="1344" height="400" viewBox="217 155 1344 400">
    <defs>
      <filter id="forest" filterUnits="userSpaceOnUse" x="217" y="155" width="1344" height="400" colorInterpolationFilters="sRGB">
        <feTurbulence type="fractalNoise" baseFrequency="0.11 0.12" numOctaves="4" seed="11" result="n" />
        <feComposite in="n" in2="SourceGraphic" operator="arithmetic" k2="1" k3="0.38" k4="-0.22" />
        <feComponentTransfer result="m"><feFuncA type="linear" slope="8" intercept="-3.500" /></feComponentTransfer>
        <feFlood floodColor="#bddab1" />
        <feComposite in2="m" operator="in" />
      </filter>
      <filter id="soft" filterUnits="userSpaceOnUse" x="217" y="155" width="1344" height="400">
        <feGaussianBlur stdDeviation="5" />
      </filter>
      <filter id="ragged" filterUnits="userSpaceOnUse" x="200" y="140" width="1380" height="430" colorInterpolationFilters="sRGB">
        <feTurbulence type="fractalNoise" baseFrequency="0.08" numOctaves="4" seed="4" />
        <feDisplacementMap in="SourceGraphic" scale="36" xChannelSelector="R" yChannelSelector="G" />
      </filter>
      <filter id="wiggle" filterUnits="userSpaceOnUse" x="200" y="140" width="1380" height="430" colorInterpolationFilters="sRGB">
        <feTurbulence type="fractalNoise" baseFrequency="0.12" numOctaves="2" seed="7" />
        <feDisplacementMap in="SourceGraphic" scale="8" xChannelSelector="R" yChannelSelector="G" />
      </filter>
      <filter id="meander" filterUnits="userSpaceOnUse" x="200" y="140" width="1380" height="430" colorInterpolationFilters="sRGB">
        <feTurbulence type="fractalNoise" baseFrequency="0.07" numOctaves="2" seed="2" />
        <feDisplacementMap in="SourceGraphic" scale="4" xChannelSelector="R" yChannelSelector="G" />
      </filter>
    </defs>
    <rect x="217" y="155" width="1344" height="400" fill="#f2efe9" />
    <g filter="url(#ragged)">
      {meadows.map(([x, y, rx, ry, fill], i) => <ellipse key={i} cx={x} cy={y} rx={rx} ry={ry} fill={fill} />)}
    </g>
    <g filter="url(#forest)">
      <g filter="url(#soft)">
        <rect x="217" y="155" width="1344" height="400" fill="#000" opacity="0.08" />
        {woods.map(([x, y, rx, ry, o], i) => <ellipse key={i} cx={x} cy={y} rx={rx} ry={ry} opacity={o * 0.92} />)}
      </g>
    </g>
    <g filter="url(#wiggle)"><path d={lakes} fill="#aad3df" /></g>
    <path d="M1561 476L1553 485 1546 488 1534 506 1526 522 1522 536 1515 555 1561 555Z" fill="#aad3df" stroke="#b9a4bf" />
    {layers.map(([key, color, width]) => (
      <g key={key} filter={key === 'rivers' || key === 'border' || key === 'park' ? 'url(#wiggle)' : 'url(#meander)'}>
        {sheets.map(s => (
          <path
            key={`${s.x}-${s.y}`} d={s[key] as string | undefined}
            transform={`translate(${s.x} ${s.y}) scale(.33333)`}
            fill="none" stroke={color} strokeWidth={width} strokeLinejoin="round"
          />
        ))}
      </g>
    ))}
    <g filter="url(#meander)" fill="none" strokeLinejoin="round" opacity="0.85">
      <path d={sheets[0].heavy} transform="translate(210 150) scale(.33333)" stroke="#808080" strokeWidth="7" />
      <path d="M345 305L335 350 330 400 345 440 330 480 325 520 350 550 335 570 320 612" transform="translate(210 150) scale(.33333)" stroke="#a48ba9" strokeWidth="9" />
      <path d="M320 0L330 30 355 55 350 85 315 100 305 130 265 130 250 150 225 165 230 225 270 240 305 305 285 370 290 400" transform="translate(210 350) scale(.33333)" stroke="#a48ba9" strokeWidth="10" />
      <path d="M290 400L240 460 230 550 150 562 90 552 55 570 20 565" transform="translate(210 350) scale(.33333)" stroke="#808080" strokeWidth="7" />
    </g>
    {labels.map(({ t, x, y, c = 'city', s = 10, a }, i) => (
      <MapLabel key={i} x={x} y={y} textAnchor={a ?? 'middle'} $kind={c} $size={s} $italic={c === 'park' || s === 11}>{t}</MapLabel>
    ))}
  </svg>
);

const days: { date: string; icon: 'sun' | 'cloud'; temp: string; humidity: string }[] = [
  { date: '08/19/2020', icon: 'sun', temp: '79.65', humidity: '37' },
  { date: '08/20/2020', icon: 'sun', temp: '77.95', humidity: '27' },
  { date: '08/21/2020', icon: 'cloud', temp: '78.48', humidity: '46' },
  { date: '08/22/2020', icon: 'sun', temp: '77.94', humidity: '34' },
  { date: '08/23/2020', icon: 'sun', temp: '76.93', humidity: '33' },
];

export default function App() {
  return (
    <Page>
      <GlobalStyle />
      <Header><Title>Location Lookup</Title></Header>
      <Content>
        <SearchBar onSubmit={e => e.preventDefault()}>
          <SearchInput defaultValue="Madrid" aria-label="City" />
          <SearchButton aria-label="Search">
            <svg width="13" height="13" viewBox="0 0 512 512">
              <path d="M505 442.700L405.300 343c-4.500-4.500-10.600-7-17-7H372c27.600-35.300 44-79.700 44-128C416 93.100 322.900 0 208 0S0 93.100 0 208s93.100 208 208 208c48.300 0 92.700-16.400 128-44v16.300c0 6.400 2.500 12.500 7 17l99.700 99.700c9.400 9.400 24.600 9.400 33.900 0l28.300-28.300c9.400-9.400 9.400-24.600.1-34zM208 336c-70.700 0-128-57.200-128-128 0-70.700 57.200-128 128-128 70.700 0 128 57.200 128 128 0 70.700-57.200 128-128 128z" />
            </svg>
          </SearchButton>
        </SearchBar>
        <SectionTitle $tracking={-0.37}>Map overview of Madrid</SectionTitle>
        <MapFrame>
          <RegionMap />
          <ZoomPanel>
            <ZoomButton $edge="top" aria-label="Zoom in">
              <svg width="9" height="9"><path d="M4.500 0V9M0 4.500H9" stroke="#fff" strokeWidth="2.200" /></svg>
            </ZoomButton>
            <ZoomButton $edge="bottom" aria-label="Zoom out">
              <svg width="9" height="9"><path d="M0 5H9" stroke="#fff" strokeWidth="2.200" /></svg>
            </ZoomButton>
          </ZoomPanel>
          <Attribution>© <a href="#osm">OpenStreetMap</a> contributors.</Attribution>
        </MapFrame>
        <SectionTitle $tracking={-0.43}>Current weather outlook and forecast for Madrid</SectionTitle>
        <Current>
          <Line>Madrid</Line>
          <WeatherIcon kind="night" />
          <Line $tracking={-0.45}>Temp: 70.84°F</Line>
          <Line>Humidity: 72%</Line>
          <Line>Wind: 5.82 mph</Line>
        </Current>
        <Forecast>
          {days.map(d => (
            <DayCard key={d.date}>
              <Line $tracking={-0.1}>{d.date}</Line>
              <WeatherIcon kind={d.icon} />
              <Line $tracking={-0.48}>Temp: {d.temp}°F</Line>
              <Line>Humidity: {d.humidity}%</Line>
            </DayCard>
          ))}
        </Forecast>
        <SectionTitle $tracking={-0.38}>Major headlines in Madrid</SectionTitle>
      </Content>
    </Page>
  );
}
